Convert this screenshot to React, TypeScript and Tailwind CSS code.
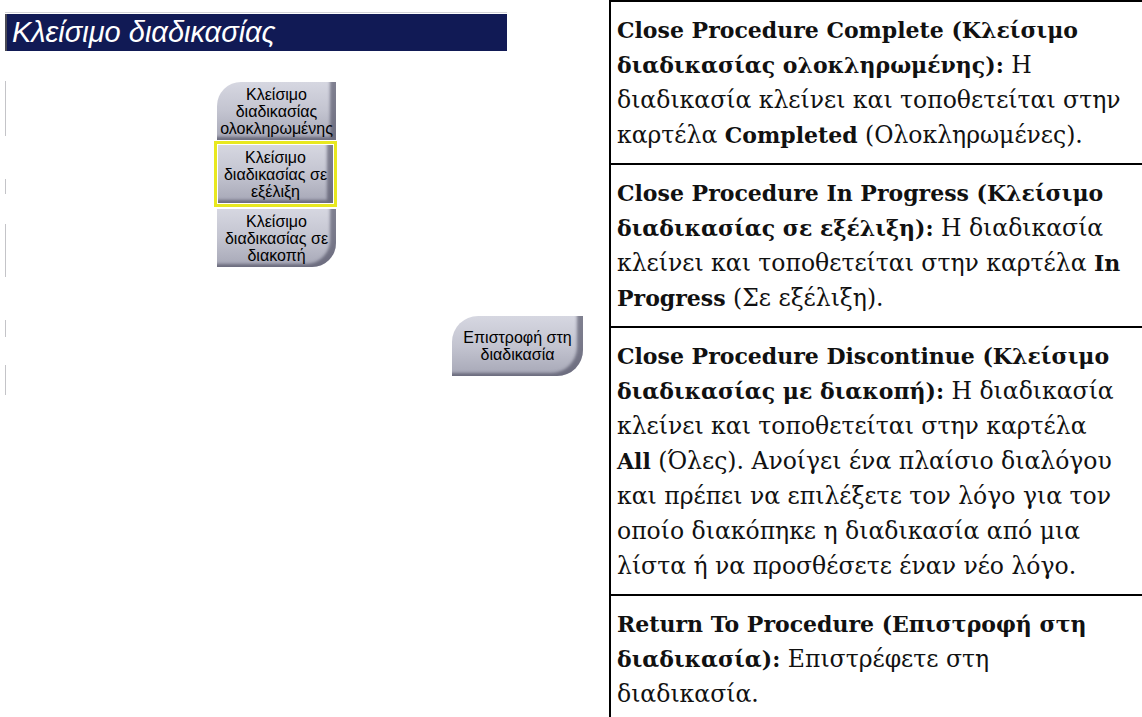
const B = ({ children }: { children: React.ReactNode }) => <b className="text-[22px]">{children}</b>;

const rows: { lines: React.ReactNode[] }[] = [
  {
    lines: [
      <B>Close Procedure Complete (Κλείσιμο</B>,
      <><B>διαδικασίας ολοκληρωμένης):</B> Η</>,
      <>διαδικασία κλείνει και τοποθετείται στην</>,
      <>καρτέλα <B>Completed</B> (Ολοκληρωμένες).</>,
    ],
  },
  {
    lines: [
      <B>Close Procedure In Progress (Κλείσιμο</B>,
      <><B>διαδικασίας σε εξέλιξη):</B> Η διαδικασία</>,
      <>κλείνει και τοποθετείται στην καρτέλα <B>In</B></>,
      <><B>Progress</B> (Σε εξέλιξη).</>,
    ],
  },
  {
    lines: [
      <B>Close Procedure Discontinue (Κλείσιμο</B>,
      <><B>διαδικασίας με διακοπή):</B> Η διαδικασία</>,
      <>κλείνει και τοποθετείται στην καρτέλα</>,
      <><B>All</B> (Όλες). Ανοίγει ένα πλαίσιο διαλόγου</>,
      <>και πρέπει να επιλέξετε τον λόγο για τον</>,
      <>οποίο διακόπηκε η διαδικασία από μια</>,
      <>λίστα ή να προσθέσετε έναν νέο λόγο.</>,
    ],
  },
  {
    lines: [
      <B>Return To Procedure (Επιστροφή στη</B>,
      <><B>διαδικασία):</B> Επιστρέφετε στη</>,
      <>διαδικασία.</>,
    ],
  },
];

function GreyButton({
  lines,
  className = '',
}: {
  lines: string[];
  className?: string;
}) {
  return (
    <div
      className={`flex flex-col items-center justify-center bg-gradient-to-b from-[#d6d7e1] via-[#c3c4d0] to-[#a6a7b6] text-[16px] leading-[17px] text-black shadow-[inset_-6px_-3px_3px_rgba(70,70,90,0.6)] ${className}`}
    >
      {lines.map((l) => (
        <span key={l}>{l}</span>
      ))}
    </div>
  );
}

export default function App() {
  return (
    <div className="flex h-[717px] w-[1142px] overflow-hidden bg-white">
      {/* Screen capture */}
      <div className="w-[609px] shrink-0 font-['Liberation_Sans',Arial,sans-serif]">
        <div className="ml-[5px] mt-[12px] h-px w-[502px] bg-[#d4d4d8]" />
        <div className="ml-[5px] mt-px flex h-[37px] w-[502px] items-center border-l-2 border-[#4a4a55] bg-[#111a55] pl-[5px]">
          <span className="text-[29px] italic leading-none text-white">Κλείσιμο διαδικασίας</span>
        </div>

        <div className="flex">
          {/* faint left edge marks */}
          <div className="ml-[5px] flex w-px flex-col">
            <div className="mt-[30px] h-[55px] bg-[#c4c4c8]" />
            <div className="mt-[43px] h-[15px] bg-[#c4c4c8]" />
            <div className="mt-[30px] h-[53px] bg-[#c4c4c8]" />
            <div className="mt-[43px] h-[17px] bg-[#c4c4c8]" />
            <div className="mt-[28px] h-[30px] bg-[#c4c4c8]" />
          </div>

          <div className="flex flex-col">
            <div className="ml-[208px] mt-[31px] flex flex-col items-start">
              <GreyButton
                lines={['Κλείσιμο', 'διαδικασίας', 'ολοκληρωμένης']}
                className="ml-[3px] h-[58px] w-[119px] rounded-tl-[24px]"
              />
              <div className="mt-[1px] border-[3px] border-[#e8e820] p-[1px]">
                <GreyButton lines={['Κλείσιμο', 'διαδικασίας σε', 'εξέλιξη']} className="h-[58px] w-[115px]" />
              </div>
              <GreyButton
                lines={['Κλείσιμο', 'διαδικασίας σε', 'διακοπή']}
                className="ml-[3px] mt-[2px] h-[58px] w-[119px] rounded-br-[24px]"
              />
            </div>
            <GreyButton
              lines={['Επιστροφή στη', 'διαδικασία']}
              className="ml-[446px] mt-[49px] h-[60px] w-[131px] rounded-tl-[26px] rounded-br-[26px]"
            />
          </div>
        </div>
      </div>

      {/* Description table */}
      <div className="flex-1 border-l-2 border-t-2 border-black font-['DejaVu_Serif',serif] text-[23.5px] leading-[35px] text-[#111]">
        {rows.map((row, i) => (
          <div key={i} className={`pb-[10px] pl-[6px] pt-[11px] ${i > 0 ? 'border-t-2 border-black' : ''}`}>
            {row.lines.map((line, j) => (
              <div key={j} className="whitespace-nowrap">
                {line}
              </div>
            ))}
          </div>
        ))}
      </div>
    </div>
  );
}
